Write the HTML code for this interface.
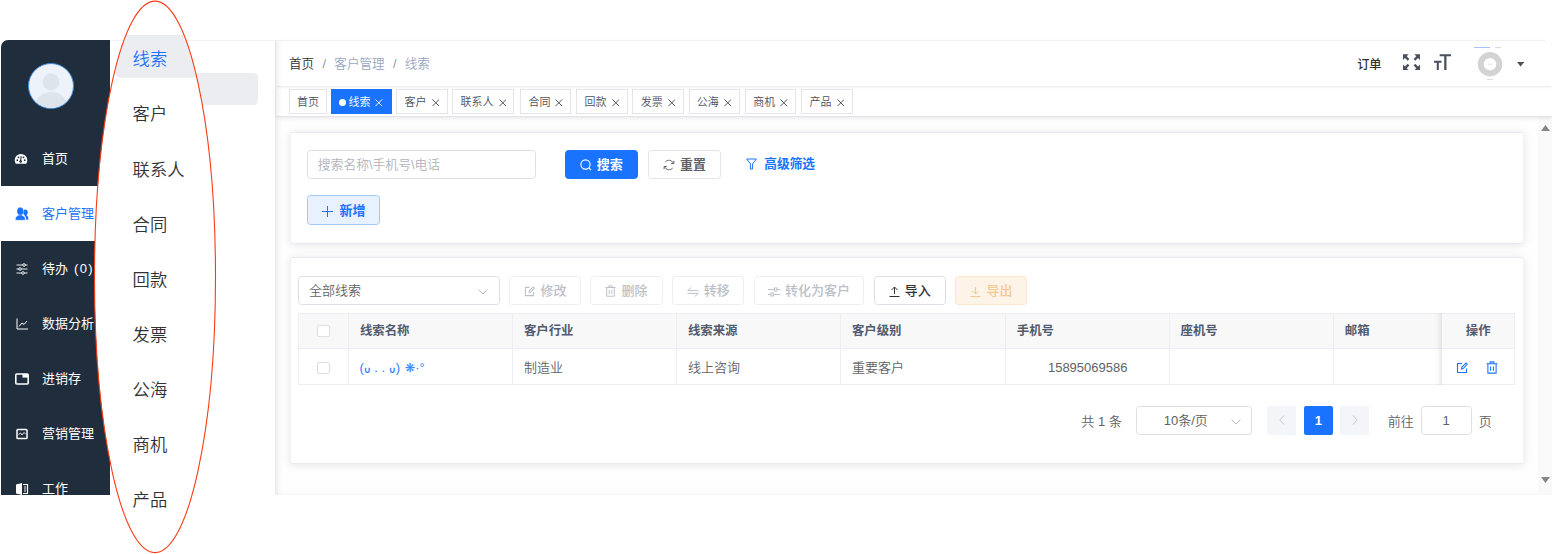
<!DOCTYPE html>
<html lang="zh-CN">
<head>
<meta charset="utf-8">
<title>线索</title>
<style>
*{box-sizing:border-box;margin:0;padding:0}
html,body{width:1552px;height:554px;overflow:hidden;background:#fff}
body{font-family:"Liberation Sans","Noto Sans CJK SC",sans-serif;font-size:13px;font-weight:350;color:#303133;position:relative}
.a{position:absolute;white-space:nowrap}
#side{left:1px;top:40px;width:109px;height:455px;background:#1f2d3d;border-radius:7px 0 0 0}
#avatar{left:28px;top:63px;width:46px;height:46px;border-radius:50%;background:#eef3fb;border:1px solid #3d8fe0;overflow:hidden}
.mi{left:1px;width:109px;height:55px;color:#fff;font-size:13px;line-height:55px;padding-left:41px;font-weight:400}
.mi svg{position:absolute;left:14px;top:21px;width:14px;height:14px}
.mi.act{background:#fff;color:#1a73ff}
#subhl{left:131px;top:72.5px;width:127px;height:32.8px;background:#ecedf1;border-radius:0 4.5px 4.5px 0}
#main{left:276px;top:40px;width:1276px;height:455px;background:linear-gradient(to bottom,#fefefe,#fefefe 451px,#f8f8f9);border-radius:0 7px 0 0}
#vsh{left:275px;top:40px;width:8px;height:455px;background:linear-gradient(to right,rgba(196,200,210,.4),rgba(196,200,210,.12) 45%,rgba(196,200,210,0))}
#topl{left:110px;top:40px;width:1436px;height:1px;background:#f1f1f3}
#hdr{left:276px;top:40px;width:1276px;height:46px;background:#fff;box-shadow:0 1px 3px rgba(0,21,41,.08);border-radius:0 7px 0 0}
#bc{left:289px;top:40px;line-height:49px;font-size:12.6px;color:#97a8be}
#bc b{font-weight:350;color:#303133}
#bc i{font-style:normal;color:#8a94a6;margin:0 8.3px}
#tags{left:276px;top:87px;width:1276px;height:30px;background:#fff;border-bottom:1px solid #e4e5ea;box-shadow:0 1px 4px rgba(0,0,0,.1)}
.tag{top:89px;height:25px;line-height:24.5px;border:1px solid #e2e4ea;background:#fff;color:#495060;font-size:11px;text-align:center}
.tag.on{background:#1a73ff;border-color:#1a73ff;color:#fff}
.tag .x{display:inline-block;margin-left:5px;vertical-align:-.5px}
.dot{display:inline-block;width:7px;height:7px;border-radius:50%;background:#fff;margin-right:2px}
.card{background:#fff;border:1px solid #e8eaf1;border-left-color:#f1f2f5;border-right-color:#f1f2f5;border-radius:3px;box-shadow:0 1px 10px rgba(0,0,0,.1)}
.ctl{height:29px;line-height:28.5px;border:1px solid #dcdfe6;border-radius:3.5px;background:#fff;font-size:13px}
.btn{text-align:center;font-weight:500}
.btn svg{vertical-align:-2px;margin-right:5px}
.dis{color:#bcc0c8;border-color:#ebeef5}
.exp{background:#fdf3e6;border-color:#fbe6cd;color:#f3c892}
.cb{display:inline-block;width:12.5px;height:12.5px;border:1px solid #dcdfe6;border-radius:2px;background:#fff;vertical-align:-2px}
.cell{height:36px;line-height:36px;padding:0 10.5px;border-right:1px solid #ebeef5;border-bottom:1px solid #ebeef5;font-size:13px}
.th{font-weight:700;color:#515a6e;font-size:12.4px;line-height:34.5px;background:#f8f8f9;border-top:1px solid #ebeef5}
.td{color:#606266;background:#fff;line-height:37.5px}
.fix{}
.nb{border-right-color:transparent}
.pg{width:29px;height:29px;line-height:30px;text-align:center;border-radius:2px;font-size:13px}
.u{font-family:'DejaVu Sans',sans-serif;font-size:9px;font-weight:700;position:relative;top:.5px;display:inline-block;width:7px;text-align:center}
.sn{font-size:12px}
.pt{line-height:31.5px;color:#606266;font-size:13px}
</style>
</head>
<body>
<div class="a" id="side"></div>
<div class="a" id="avatar"><svg width="44" height="44" viewBox="0 0 44 44"><circle cx="22" cy="18" r="8.5" fill="#dde4ec"/><ellipse cx="22" cy="42" rx="16" ry="14" fill="#dde4ec"/></svg></div>
<div class="a mi" style="top:131px"><svg viewBox="0 0 14 14" style="left:13.3px;top:20.7px"><path d="M7 2a6.3 6.3 0 0 0-6.3 6.3c0 1.3.4 2.5 1.1 3.5h10.4a6.2 6.2 0 0 0 1.1-3.5A6.3 6.3 0 0 0 7 2z" fill="#fff"/><circle cx="3.3" cy="8.2" r=".9" fill="#1f2d3d"/><circle cx="4.5" cy="5.3" r=".9" fill="#1f2d3d"/><circle cx="10.7" cy="8.2" r=".9" fill="#1f2d3d"/><circle cx="9.5" cy="5.3" r=".9" fill="#1f2d3d"/><path d="M6.4 9.5 7.3 4.2" stroke="#1f2d3d" stroke-width="1.1"/><circle cx="6.7" cy="9.5" r="1.3" fill="#1f2d3d"/></svg>首页</div>
<div class="a mi act" style="top:186px"><svg viewBox="0 0 14 14" style="left:13.5px;top:20.5px"><ellipse cx="10.4" cy="5.3" rx="2.3" ry="2.9" fill="#1a73ff"/><path d="M9.4 7.9h1.9c1.5.9 2 1.8 2 3.5v1.3h-2.1c0-1.9-.6-3-1.8-4.8z" fill="#1a73ff"/><ellipse cx="5.3" cy="4.2" rx="3.05" ry="3.65" fill="#1a73ff" stroke="#fff" stroke-width=".8"/><path d="M.4 13.3v-2.1c0-1.3 1.3-2 3.4-3.3h3c2.1 1.3 3.4 2 3.4 3.3v2.1z" fill="#1a73ff" stroke="#fff" stroke-width=".5"/><ellipse cx="5.3" cy="4.2" rx="3.05" ry="3.65" fill="#1a73ff"/></svg>客户管理</div>
<div class="a mi" style="top:241px"><svg viewBox="0 0 14 14" fill="none" stroke="#fff" stroke-width=".9"><path d="M1.5 3h11M1.5 7h11M1.5 11h11"/><circle cx="9" cy="3" r="1.3" fill="#1f2d3d"/><circle cx="5" cy="7" r="1.3" fill="#1f2d3d"/><circle cx="8" cy="11" r="1.3" fill="#1f2d3d"/></svg>待办<span style="letter-spacing:1.3px;margin-left:6px">(0)</span></div>
<div class="a mi" style="top:296px"><svg viewBox="0 0 14 14" fill="none" stroke="#fff" stroke-width="1"><path d="M2 1.5v10.5h11M4 9.5l3-3.5 2 1.5 3-3.5"/></svg>数据分析</div>
<div class="a mi" style="top:351px"><svg viewBox="0 0 14 14"><rect x=".8" y="2" width="12.4" height="10" rx="1" fill="none" stroke="#fff" stroke-width="1.6"/><rect x="7.5" y="2" width="5.5" height="3.6" fill="#fff"/></svg>进销存</div>
<div class="a mi" style="top:406px"><svg viewBox="0 0 14 14" fill="none" stroke="#fff"><rect x="2" y="2.5" width="10" height="9" rx=".8" stroke-width="1.5"/><path d="M3.5 7.5l2-1.5 1.5 2 2-2.5 1.5 1.5" stroke-width=".9"/></svg>营销管理</div>
<div class="a mi" style="top:461px"><svg viewBox="0 0 14 14"><path d="M1 2.5 7 1v12l-6-1.5z" fill="#fff"/><path d="M8 2.5h4.5v9H8" fill="none" stroke="#fff" stroke-width="1.2"/><path d="M9 5h2M9 7h2M9 9h2" stroke="#fff" stroke-width=".9"/></svg>工作</div>
<div class="a" id="subhl"></div>
<div class="a" id="main"></div>
<div class="a card" style="left:289.5px;top:132px;width:1234.5px;height:112px"></div>
<div class="a ctl" style="left:307.3px;top:150px;width:228.4px;padding-left:9.5px;color:#b0b4bc;font-size:12.8px">搜索名称\手机号\电话</div>
<div class="a ctl btn" style="left:565px;top:150px;width:72.5px;background:#1a73ff;border-color:#1a73ff;color:#fff;font-weight:700"><svg width="12" height="12" viewBox="0 0 12 12" fill="none" stroke="#fff" stroke-width="1.1"><circle cx="5.5" cy="5.5" r="4.6"/><path d="M9 9l2 2"/></svg>搜索</div>
<div class="a ctl btn" style="left:648.3px;top:150px;width:72.5px;color:#606266;font-weight:700;border-color:#e1e4ea"><svg width="12" height="12" viewBox="0 0 12 12" fill="none" stroke="#606266" stroke-width="1"><path d="M10.3 4.2A4.7 4.7 0 0 0 2.3 3M1.7 7.8A4.7 4.7 0 0 0 9.7 9"/><path d="M10.9 1.8v2.7H8.2M1.1 10.2V7.5h2.7"/></svg>重置</div>
<div class="a" style="left:746.3px;top:150px;line-height:29.5px;color:#1a73ff;font-weight:700;font-size:12.7px"><svg width="11" height="12" viewBox="0 0 11 12" fill="none" stroke="#1a73ff" stroke-width="1" style="vertical-align:-2px;margin-right:7px"><path d="M.7 1h9.6L6.6 5.8V11H4.4V5.8z"/></svg>高级筛选</div>
<div class="a ctl btn" style="left:307.3px;top:195px;width:72.5px;height:29.5px;line-height:29.5px;background:#e8f1ff;border-color:#a3c7fd;color:#1a73ff;font-weight:700"><svg width="11" height="11" viewBox="0 0 11 11" stroke="#1a73ff" stroke-width="1" style="margin-right:7px"><path d="M5.5 0v11M0 5.5h11"/></svg>新增</div>
<div class="a card" style="left:289.5px;top:257px;width:1234.5px;height:207px"></div>
<div class="a ctl" style="left:298.4px;top:276px;width:201.4px;padding-left:9.5px;color:#606266">全部线索<span class="a" style="left:179px;top:0"><svg width="10" height="6" viewBox="0 0 10 6" fill="none" stroke="#b8bcc4" stroke-width="1"><path d="M.5.5 5 5 9.5.5"/></svg></span></div>
<div class="a ctl btn dis" style="left:509.4px;top:276px;width:72.0px"><svg width="11" height="11" viewBox="0 0 12 12" fill="none" stroke="currentColor" stroke-width="1.1"><path d="M10.5 6.5v4h-9v-9h4.5"/><path d="M5.5 7l.3-1.8L10 1l1.3 1.3L7.2 6.6z"/></svg>修改</div>
<div class="a ctl btn dis" style="left:590.2px;top:276px;width:72.5px"><svg width="11" height="12" viewBox="0 0 11 12" fill="none" stroke="currentColor" stroke-width="1"><path d="M.5 2.5h10M3.8 2.5V.8h3.4v1.7M1.7 2.5v8.7h7.6V2.5M4.2 5v4M6.8 5v4"/></svg>删除</div>
<div class="a ctl btn dis" style="left:672.1px;top:276px;width:72.4px"><svg width="12" height="10" viewBox="0 0 12 10" fill="none" stroke="currentColor" stroke-width="1"><path d="M11.5 3.6H.7L4.3.4M.5 6.4h10.8L7.7 9.6"/></svg>转移</div>
<div class="a ctl btn dis" style="left:753.5px;top:276px;width:110.9px"><svg width="12" height="10" viewBox="0 0 12 10" fill="none" stroke="currentColor" stroke-width="1"><path d="M0 2.5h12M0 7.5h12"/><rect x="6.5" y="1" width="2.4" height="3" fill="#fff"/><rect x="3" y="6" width="2.4" height="3" fill="#fff"/></svg>转化为客户</div>
<div class="a ctl btn " style="left:873.6px;top:276px;width:72.2px"><svg width="11" height="11" viewBox="0 0 11 11" fill="none" stroke="currentColor" stroke-width="1"><path d="M.5 10.5h10M5.5 8V1M2.5 4l3-3 3 3"/></svg>导入</div>
<div class="a ctl btn exp" style="left:955.3px;top:276px;width:72.2px"><svg width="11" height="11" viewBox="0 0 11 11" fill="none" stroke="currentColor" stroke-width="1"><path d="M.5 10.5h10M5.5 1v7M2.5 5l3 3 3-3"/></svg>导出</div>
<div class="a cell td" style="left:298.4px;top:349px;width:51.0px;text-align:center"><span class="cb"></span></div><div class="a cell th" style="left:298.4px;top:313px;width:51.0px;text-align:center"><span class="cb"></span></div>
<div class="a cell td" style="left:349.4px;top:349px;width:164.0px;text-align:left"><span style="color:#2f7dff;margin-left:-.5px">(<span class="u">∪</span> . . <span class="u">∪</span>) <span class="sn" style="margin-left:1.5px">❋</span>·°</span></div><div class="a cell th" style="left:349.4px;top:313px;width:164.0px;text-align:left">线索名称</div>
<div class="a cell td" style="left:513.4px;top:349px;width:164.0px;text-align:left">制造业</div><div class="a cell th" style="left:513.4px;top:313px;width:164.0px;text-align:left">客户行业</div>
<div class="a cell td" style="left:677.4px;top:349px;width:164.0px;text-align:left">线上咨询</div><div class="a cell th" style="left:677.4px;top:313px;width:164.0px;text-align:left">线索来源</div>
<div class="a cell td" style="left:841.4px;top:349px;width:164.9px;text-align:left">重要客户</div><div class="a cell th" style="left:841.4px;top:313px;width:164.9px;text-align:left">客户级别</div>
<div class="a cell td" style="left:1006.3px;top:349px;width:163.8px;text-align:center">15895069586</div><div class="a cell th" style="left:1006.3px;top:313px;width:163.8px;text-align:left">手机号</div>
<div class="a cell td" style="left:1170.1px;top:349px;width:164.2px;text-align:left"></div><div class="a cell th" style="left:1170.1px;top:313px;width:164.2px;text-align:left">座机号</div>
<div class="a cell td nb" style="left:1334.3px;top:349px;width:108.0px;text-align:left"></div><div class="a cell th nb" style="left:1334.3px;top:313px;width:108.0px;text-align:left">邮箱</div>
<div class="a cell td fix" style="left:1442.3px;top:349px;width:72.7px;text-align:center"><span style="color:#1a73ff;margin-right:9px;position:relative;top:2px;left:-1px"><svg width="12" height="12" viewBox="0 0 12 12" fill="none" stroke="currentColor" stroke-width="1.1"><path d="M10.5 6.5v4h-9v-9h4.5"/><path d="M5.5 7l.3-1.8L10 1l1.3 1.3L7.2 6.6z"/></svg></span><span style="color:#1a73ff;margin-left:9px;position:relative;top:2px;left:-1px"><svg width="12" height="13" viewBox="0 0 11 12" fill="none" stroke="currentColor" stroke-width="1"><path d="M.5 2.5h10M3.8 2.5V.8h3.4v1.7M1.7 2.5v8.7h7.6V2.5M4.2 5v4M6.8 5v4"/></svg></span></div><div class="a cell th fix" style="left:1442.3px;top:313px;width:72.7px;text-align:center">操作</div>
<div class="a" style="left:298px;top:313px;width:1px;height:72px;background:#ebeef5"></div>
<div class="a" style="left:1435.3px;top:313px;width:7px;height:72px;background:linear-gradient(to right,rgba(0,0,0,0),rgba(0,0,0,.025) 45%,rgba(0,0,0,.085))"></div>
<div class="a pt" style="left:1081.3px;top:406px">共 1 条</div>
<div class="a ctl" style="left:1135.8px;top:406px;width:116.4px;color:#606266;padding-left:27px">10条/页<span class="a" style="left:94px;top:0"><svg width="10" height="6" viewBox="0 0 10 6" fill="none" stroke="#b8bcc4" stroke-width="1"><path d="M.5.5 5 5 9.5.5"/></svg></span></div>
<div class="a pg" style="left:1267.2px;top:406px;background:#f4f5f8"><svg width="6" height="10" viewBox="0 0 6 10" fill="none" stroke="#c0c4cc" stroke-width="1"><path d="M5 .5.8 5 5 9.5"/></svg></div>
<div class="a pg" style="left:1303.5px;top:406px;background:#1a73ff;color:#fff;font-weight:700;width:29.5px">1</div>
<div class="a pg" style="left:1340.4px;top:406px;background:#f4f5f8"><svg width="6" height="10" viewBox="0 0 6 10" fill="none" stroke="#c0c4cc" stroke-width="1"><path d="M1 .5 5.2 5 1 9.5"/></svg></div>
<div class="a pt" style="left:1387.8px;top:406px">前往</div>
<div class="a ctl" style="left:1420.6px;top:406px;width:51.2px;color:#606266;text-align:center">1</div>
<div class="a pt" style="left:1478.8px;top:406px">页</div>
<div class="a" style="left:1538px;top:117px;width:14px;height:378px;background:#f9f9f9"></div>
<svg class="a" style="left:1541px;top:125px" width="9" height="6" viewBox="0 0 9 6"><path d="M0 6 4.5 0 9 6z" fill="#858585"/></svg>
<svg class="a" style="left:1541px;top:477px" width="9" height="6" viewBox="0 0 9 6"><path d="M0 0h9L4.5 6z" fill="#858585"/></svg>
<div class="a" id="tags"></div>
<div class="a tag" style="left:289.3px;width:37.4px">首页</div>
<div class="a tag on" style="left:331.0px;width:60.5px"><span class="dot"></span>线索<svg class="x" width="7.6" height="7.6" viewBox="0 0 7 7" fill="none" stroke="currentColor" stroke-width=".9"><path d="M.4.4l6.2 6.2M6.6.4l-6.2 6.2"/></svg></div>
<div class="a tag" style="left:396.0px;width:51.6px">客户<svg class="x" width="7.6" height="7.6" viewBox="0 0 7 7" fill="none" stroke="currentColor" stroke-width=".9"><path d="M.4.4l6.2 6.2M6.6.4l-6.2 6.2"/></svg></div>
<div class="a tag" style="left:452.2px;width:62.3px">联系人<svg class="x" width="7.6" height="7.6" viewBox="0 0 7 7" fill="none" stroke="currentColor" stroke-width=".9"><path d="M.4.4l6.2 6.2M6.6.4l-6.2 6.2"/></svg></div>
<div class="a tag" style="left:520.2px;width:51.2px">合同<svg class="x" width="7.6" height="7.6" viewBox="0 0 7 7" fill="none" stroke="currentColor" stroke-width=".9"><path d="M.4.4l6.2 6.2M6.6.4l-6.2 6.2"/></svg></div>
<div class="a tag" style="left:576.2px;width:51.4px">回款<svg class="x" width="7.6" height="7.6" viewBox="0 0 7 7" fill="none" stroke="currentColor" stroke-width=".9"><path d="M.4.4l6.2 6.2M6.6.4l-6.2 6.2"/></svg></div>
<div class="a tag" style="left:632.4px;width:51.3px">发票<svg class="x" width="7.6" height="7.6" viewBox="0 0 7 7" fill="none" stroke="currentColor" stroke-width=".9"><path d="M.4.4l6.2 6.2M6.6.4l-6.2 6.2"/></svg></div>
<div class="a tag" style="left:688.5px;width:51.2px">公海<svg class="x" width="7.6" height="7.6" viewBox="0 0 7 7" fill="none" stroke="currentColor" stroke-width=".9"><path d="M.4.4l6.2 6.2M6.6.4l-6.2 6.2"/></svg></div>
<div class="a tag" style="left:744.8px;width:51.4px">商机<svg class="x" width="7.6" height="7.6" viewBox="0 0 7 7" fill="none" stroke="currentColor" stroke-width=".9"><path d="M.4.4l6.2 6.2M6.6.4l-6.2 6.2"/></svg></div>
<div class="a tag" style="left:801.1px;width:51.5px">产品<svg class="x" width="7.6" height="7.6" viewBox="0 0 7 7" fill="none" stroke="currentColor" stroke-width=".9"><path d="M.4.4l6.2 6.2M6.6.4l-6.2 6.2"/></svg></div>
<div class="a" id="hdr"></div>
<div class="a" id="bc"><b>首页</b><i>/</i>客户管理<i>/</i>线索</div>
<div class="a" style="left:1357.2px;top:40px;line-height:50px;font-size:12.2px;color:#303133;font-weight:500">订单</div>
<svg class="a" style="left:1403px;top:53.5px" width="17" height="16.5" viewBox="0 0 18 17" fill="#4a505c"><path d="M0 0h6L3.9 2.1 6.8 5 5 6.8 2.1 3.9 0 6zM18 0v6l-2.1-2.1L13 6.8 11.2 5l2.9-2.9L12 0zM0 17v-6l2.1 2.1L5 10.2 6.8 12l-2.9 2.9L6 17zM18 17h-6l2.1-2.1-2.9-2.9 1.8-1.8 2.9 2.9L18 11z"/></svg>
<svg class="a" style="left:1434.3px;top:53.5px" width="17" height="16.5" viewBox="0 0 18 17" fill="#4a505c"><path d="M6 0h12v2.2h-4.8V17h-2.4V2.2H6zM0 7h8v2H5.1v8H2.9V9H0z"/></svg>
<svg class="a" style="left:1473px;top:45px" width="34" height="38" viewBox="0 0 34 38"><circle cx="17" cy="19.2" r="9.2" fill="none" stroke="#d3d3d3" stroke-width="6"/><path d="M1 2.5h16" stroke="#8db4f5" stroke-width=".8"/><path d="M22 2.5h6M14 34.5h6" stroke="#d8d8d8" stroke-width=".9"/><path d="M14.5 19.2h5" stroke="#ccc" stroke-width=".6"/></svg>
<svg class="a" style="left:1517.3px;top:62.2px" width="7.2" height="4.6" viewBox="0 0 8 5"><path d="M0 0h8L4 5z" fill="#4a505c"/></svg>
<div class="a" id="vsh"></div><div class="a" id="topl"></div>
<svg class="a" width="1552" height="554" viewBox="0 0 1552 554" style="left:0;top:0">
<defs><clipPath id="ec"><ellipse cx="155" cy="276.85" rx="60.5" ry="275.75"/></clipPath></defs>
<ellipse cx="155" cy="276.85" rx="60.5" ry="275.75" fill="#fff"/>
<g clip-path="url(#ec)"><rect x="115.5" y="35" width="150" height="42.7" rx="5" fill="#ecedf1"/>
<g font-family="'Liberation Sans','Noto Sans CJK SC',sans-serif" font-size="17.3" font-weight="350"><text x="132.6" y="65.1" fill="#1a73ff">线索</text><text x="132.6" y="120.1" fill="#303236">客户</text><text x="132.6" y="176.1" fill="#303236">联系人</text><text x="132.6" y="231.1" fill="#303236">合同</text><text x="132.6" y="286.1" fill="#303236">回款</text><text x="132.6" y="341.1" fill="#303236">发票</text><text x="132.6" y="396.1" fill="#303236">公海</text><text x="132.6" y="451.1" fill="#303236">商机</text><text x="132.6" y="506.1" fill="#303236">产品</text></g></g>
<ellipse cx="155" cy="276.85" rx="60.5" ry="275.75" fill="none" stroke="#fa3c12" stroke-width="1.1"/>
</svg>
</body>
</html>
